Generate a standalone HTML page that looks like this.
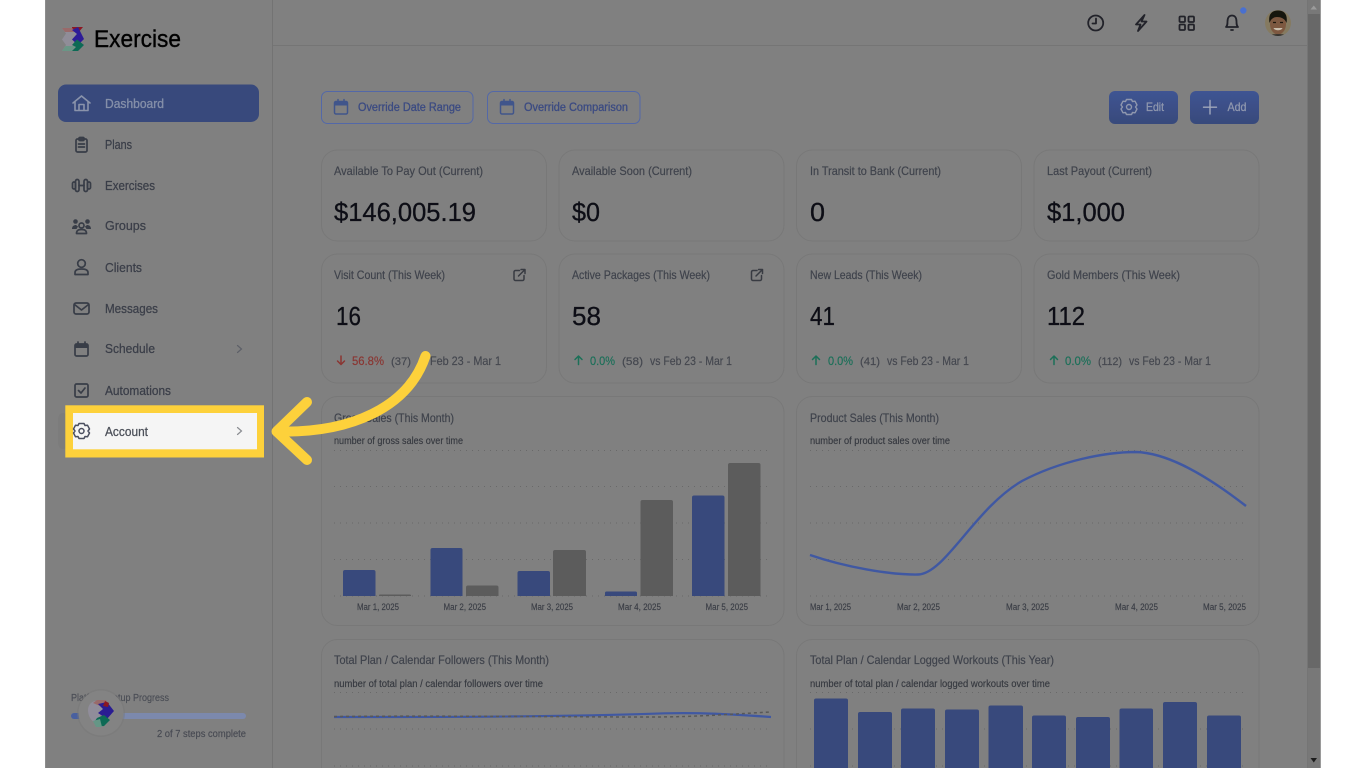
<!DOCTYPE html>
<html lang="en">
<head>
<meta charset="utf-8">
<title>Exercise Dashboard</title>
<style>
html,body{margin:0;padding:0;width:1366px;height:768px;overflow:hidden;background:#fff}
svg{display:block}
text{font-family:"Liberation Sans",sans-serif;white-space:pre}
.nav{font-size:13px;fill:#3a3e48;stroke:#3a3e48;stroke-width:.25px}
.t{font-size:12px;fill:#3f434c;stroke:#3f434c;stroke-width:.2px}
.v{font-size:25.5px;fill:#0e1015;stroke:#0e1015;stroke-width:.3px}
.d{font-size:12px;fill:#44474f;stroke:#44474f;stroke-width:.18px}
.s{font-size:10px;fill:#35383f;stroke:#35383f;stroke-width:.15px}
.x{font-size:9px;fill:#3a3d45;stroke:#3a3d45;stroke-width:.15px}
.ov{font-size:11.5px;fill:#3b4b82;stroke:#3b4b82;stroke-width:.3px}
.ic{fill:none;stroke:#383c47;stroke-width:1.7;stroke-linecap:round;stroke-linejoin:round}
.tp{fill:none;stroke:#222429;stroke-width:1.8;stroke-linecap:round;stroke-linejoin:round}
.ext{fill:none;stroke:#383b43;stroke-width:1.5;stroke-linecap:round;stroke-linejoin:round}
.card{fill:#808080;stroke:#787878;stroke-width:1}
.g{stroke:#696969;stroke-width:1;stroke-dasharray:1 5}
.b{fill:#384a7b}
.k{fill:#5c5c5c}
</style>
</head>
<body>
<svg width="1366" height="768" viewBox="0 0 1366 768" xmlns="http://www.w3.org/2000/svg">
<defs>
<filter id="soft" x="-10" y="-10" width="1386" height="788" filterUnits="userSpaceOnUse"><feGaussianBlur stdDeviation="0.35"/></filter>
<linearGradient id="bg" x1="0" y1="0" x2="0" y2="1"><stop offset="0" stop-color="#3f5493"/><stop offset="1" stop-color="#384a7b"/></linearGradient>
<clipPath id="av"><circle cx="1278" cy="23" r="13"/></clipPath>
</defs>
<rect width="1366" height="768" fill="#fff"/>
<g filter="url(#soft)">
<rect x="45" y="-10" width="1276" height="788" fill="#808080"/>
<rect x="45" y="-10" width="1" height="788" fill="#8d8d8d"/>

<!-- scrollbar -->
<rect x="1307" y="-10" width="13" height="788" fill="#787878"/>
<rect x="1307" y="-10" width="1" height="788" fill="#757575"/>
<rect x="1320" y="-10" width="1" height="788" fill="#9a9a9a"/>
<rect x="1308" y="14" width="12" height="654" fill="#676767"/>
<path d="M1310.5 9.5L1313.8 5.5L1317 9.5Z" fill="#9b9b9b"/>
<path d="M1310.5 758L1313.8 762.5L1317 758Z" fill="#1f1f1f"/>

<!-- structure lines -->
<rect x="272" y="-10" width="1" height="788" fill="#737373"/>
<rect x="273" y="45" width="1034" height="1" fill="#747474"/>

<!-- logo -->
<path d="M62 28H72L77 33.500L72 39.500L77 45L72 51H62L66 45L62 39.500L66 33.500Z" fill="#908d98"/>
<path d="M62 28H72L75.500 32H65Z" fill="#996a6a"/>
<path d="M62 51L65.500 46H75.500L72 51Z" fill="#6a9686"/>
<path d="M72 27H83L78 33L72 28Z" fill="#8c1620"/>
<path d="M72 30L78 27L84 39L78 45L72 39.500L77 34Z" fill="#2f1d98"/>
<path d="M72 45L77 39.500L84 45L78 51H72L76 47Z" fill="#0f6a55"/>
<text x="94" y="47" font-size="24" fill="#060606" stroke="#060606" stroke-width=".4" textLength="87" lengthAdjust="spacingAndGlyphs">Exercise</text>

<!-- nav -->
<rect x="58" y="84.500" width="201" height="37.500" rx="8" fill="#384a7b"/>
<path d="M73 103L81.500 96L90 103M75 101.500V110.500H88V101.500M79 110.500V104.500H84V110.500" fill="none" stroke="#8a93ab" stroke-width="1.600" stroke-linecap="round" stroke-linejoin="round"/>
<text x="105" y="108" class="nav" style="fill:#858fa9;stroke:#858fa9;stroke-width:.3px" textLength="59" lengthAdjust="spacingAndGlyphs">Dashboard</text>

<g class="ic">
<rect x="76" y="139" width="11" height="13" rx="1.500"/><rect x="79" y="137.500" width="5" height="3" rx="1"/><path d="M78.500 144H84.500M78.500 147H84.500"/>
</g>
<text x="105" y="149" class="nav" textLength="27" lengthAdjust="spacingAndGlyphs">Plans</text>

<g class="ic">
<rect x="75.500" y="179.500" width="3.500" height="12" rx="1.700"/><rect x="84" y="179.500" width="3.500" height="12" rx="1.700"/>
<rect x="72.500" y="182" width="3" height="7" rx="1.500"/><rect x="87.500" y="182" width="3" height="7" rx="1.500"/>
<path d="M79 185.500H84"/>
</g>
<text x="105" y="190" class="nav" textLength="50" lengthAdjust="spacingAndGlyphs">Exercises</text>

<g fill="#383c47">
<circle cx="75.500" cy="221.500" r="2.300"/><circle cx="87.500" cy="221.500" r="2.300"/>
<path d="M72 229C72 226 74 225 76 225L78 226.500L76.500 229ZM91 229C91 226 89 225 87 225L85 226.500L86.500 229Z"/>
</g>
<g class="ic"><circle cx="81.500" cy="225.500" r="2.500"/><path d="M76.500 233.500C76.500 230 79 229.500 81.500 229.500C84 229.500 86.500 230 86.500 233.500Z"/></g>
<text x="105" y="230" class="nav" textLength="41" lengthAdjust="spacingAndGlyphs">Groups</text>

<g class="ic"><circle cx="81.500" cy="263.500" r="3.800"/><path d="M75 274.500V272.500C75 270 78 269 81.500 269C85 269 88 270 88 272.500V274.500Z"/></g>
<text x="105" y="272" class="nav" textLength="37" lengthAdjust="spacingAndGlyphs">Clients</text>

<g class="ic"><rect x="74" y="303" width="15" height="11" rx="2"/><path d="M74.500 304.500L81.500 310L88.500 304.500"/></g>
<text x="105" y="313" class="nav" textLength="53" lengthAdjust="spacingAndGlyphs">Messages</text>

<g class="ic"><rect x="75" y="344" width="13" height="12" rx="1.500"/><path d="M78 342V344M85 342V344"/></g>
<path d="M75 344H88V348H75Z" fill="#383c47"/>
<text x="105" y="353" class="nav" textLength="50" lengthAdjust="spacingAndGlyphs">Schedule</text>
<path d="M237.500 345.500L241.500 349L237.500 352.500" fill="none" stroke="#5d6068" stroke-width="1.200" stroke-linecap="round"/>

<g class="ic"><rect x="75" y="384" width="13" height="13" rx="1.500"/><path d="M78.500 390.500L81 393L85 388"/></g>
<text x="105" y="395" class="nav" textLength="66" lengthAdjust="spacingAndGlyphs">Automations</text>

<!-- highlight -->
<rect x="58" y="413" width="10" height="36" rx="6" fill="#7b7b7b"/>
<rect x="65.300" y="405.300" width="198.700" height="52.200" fill="#fdd13b"/>
<rect x="73" y="413" width="184" height="36.300" fill="#f5f5f5"/>
<g fill="none" stroke="#4b5060" stroke-width="1.500" stroke-linejoin="round">
<path d="M79 423.500H84L85 425.500L87.500 425.200L89.500 429L88 431L89.500 433L87.500 436.800L85 436.500L84 438.500H79L78 436.500L75.500 436.800L73.500 433L75 431L73.500 429L75.500 425.200L78 425.500Z"/>
<circle cx="81.500" cy="431" r="2.500"/>
</g>
<text x="105" y="436" class="nav" style="fill:#4b4f58;stroke:#4b4f58" textLength="43" lengthAdjust="spacingAndGlyphs">Account</text>
<path d="M237.500 427.500L241.500 431L237.500 434.500" fill="none" stroke="#8b8d92" stroke-width="1.200" stroke-linecap="round"/>

<!-- setup progress -->
<text x="71" y="701" class="s" style="fill:#4a4d55;stroke:#4a4d55" textLength="98" lengthAdjust="spacingAndGlyphs">Platform Setup Progress</text>
<rect x="71" y="713" width="175" height="6" rx="3" fill="#7b89ad"/>
<rect x="71" y="713" width="14" height="6" rx="3" fill="#48609f"/>
<text x="157" y="737" class="s" style="fill:#474a52;stroke:#474a52" textLength="89" lengthAdjust="spacingAndGlyphs">2 of 7 steps complete</text>
<circle cx="101" cy="713" r="24" fill="#787878" opacity=".45"/>
<circle cx="101" cy="713" r="22.500" fill="#838383"/>
<path d="M88 710C88 704 93 700 98 701L104 708L100 716L104 722C97 727 88 720 88 710Z" fill="#908d9a"/>
<path d="M93 703L97 700H106L108 705L100 706Z" fill="#996a6a"/>
<path d="M98 704L107 702L114 711L107 719L98 713L103 709Z" fill="#2b1f92"/>
<path d="M105 701L109 703L108 707L103 706Z" fill="#8c1620"/>
<path d="M97 718L104 715L110 720L104 726C100 727 97 722 95 721Z" fill="#0f6a55"/>
<path d="M93 721L100 719L102 727H96Z" fill="#659686"/>

<!-- top icons -->
<g class="tp">
<circle cx="1095.700" cy="23" r="7.500"/><path d="M1096 18.500V23.500L1092.500 23.500"/>
<path d="M1144.500 15L1136 24.500H1140.500L1138 31L1146.500 21.500H1141.500Z"/>
<rect x="1179.500" y="16.500" width="5.500" height="5.500" rx="1"/><rect x="1188.500" y="16.500" width="5.500" height="5.500" rx="1"/><rect x="1179.500" y="24.500" width="5.500" height="5.500" rx="1"/><rect x="1188.500" y="24.500" width="5.500" height="5.500" rx="1"/>
<path d="M1226 27C1227.500 25.500 1227.500 24 1227.500 21.500C1227.500 18 1229 15.500 1232 15.500C1235 15.500 1236.500 18 1236.500 21.500C1236.500 24 1236.500 25.500 1238 27ZM1231 30H1233"/>
</g>
<circle cx="1243.300" cy="10.500" r="3.200" fill="#4a6fd0"/>
<g clip-path="url(#av)">
<rect x="1265" y="10" width="26" height="26" fill="#857a60"/>
<ellipse cx="1278" cy="24" rx="8" ry="10.500" fill="#7d5840"/>
<path d="M1269.500 23C1268 14 1272 10.500 1278 10.500C1284 10.500 1288 14 1286.500 23C1285 18.500 1281 17 1277 17C1274 17 1271 18.500 1269.500 23Z" fill="#16120f"/>
<path d="M1273.500 28H1282.500C1281.500 31 1274.500 31 1273.500 28Z" fill="#c9bdad"/>
<path d="M1273 22.500H1276M1280 22.500H1283" stroke="#1c1410" stroke-width="1.300"/>
<path d="M1267 36C1270 33.500 1286 33.500 1289 36Z" fill="#33302d"/>
</g>

<!-- override buttons -->
<rect x="321.500" y="91.500" width="151.500" height="32" rx="6" fill="none" stroke="#5268a8"/>
<rect x="487.500" y="91.500" width="152.500" height="32" rx="6" fill="none" stroke="#5268a8"/>
<g fill="none" stroke="#40548b" stroke-width="1.500" stroke-linecap="round">
<rect x="334.500" y="101.500" width="13" height="12.500" rx="1.500"/><path d="M338 99.500V101.500M344 99.500V101.500"/>
<rect x="500.500" y="101.500" width="13" height="12.500" rx="1.500"/><path d="M504 99.500V101.500M510 99.500V101.500"/>
</g>
<path d="M334.500 101.500H347.500V105.500H334.500ZM500.500 101.500H513.500V105.500H500.500Z" fill="#40548b"/>
<text x="358" y="111" class="ov" textLength="103" lengthAdjust="spacingAndGlyphs">Override Date Range</text>
<text x="524" y="111" class="ov" textLength="104" lengthAdjust="spacingAndGlyphs">Override Comparison</text>

<!-- edit add buttons -->
<rect x="1109" y="91" width="69" height="33" rx="6" fill="url(#bg)"/>
<rect x="1190" y="91" width="69" height="33" rx="6" fill="url(#bg)"/>
<g fill="none" stroke="#8f97ae" stroke-width="1.400" stroke-linejoin="round">
<path d="M1126.500 99.500H1131.500L1132.500 101.500L1135 101.200L1137 105L1135.500 107L1137 109L1135 112.800L1132.500 112.500L1131.500 114.500H1126.500L1125.500 112.500L1123 112.800L1121 109L1122.500 107L1121 105L1123 101.200L1125.500 101.500Z"/>
<circle cx="1129" cy="107" r="2.500"/>
</g>
<path d="M1210 100.500V114M1203.500 107.200H1216.500" stroke="#a0a7bb" stroke-width="1.400" stroke-linecap="round"/>
<text x="1146" y="111" font-size="12" fill="#8f97ae" stroke="#8f97ae" stroke-width=".3" textLength="18" lengthAdjust="spacingAndGlyphs">Edit</text>
<text x="1227.500" y="111" font-size="12" fill="#8f97ae" stroke="#8f97ae" stroke-width=".3" textLength="19" lengthAdjust="spacingAndGlyphs">Add</text>

<!-- row 1 -->
<rect class="card" x="321.500" y="150" width="225" height="91" rx="16"/>
<rect class="card" x="559" y="150" width="225" height="91" rx="16"/>
<rect class="card" x="796.500" y="150" width="225" height="91" rx="16"/>
<rect class="card" x="1034" y="150" width="225" height="91" rx="16"/>
<text x="334" y="175" class="t" textLength="149" lengthAdjust="spacingAndGlyphs">Available To Pay Out (Current)</text>
<text x="572" y="175" class="t" textLength="120" lengthAdjust="spacingAndGlyphs">Available Soon (Current)</text>
<text x="810" y="175" class="t" textLength="131" lengthAdjust="spacingAndGlyphs">In Transit to Bank (Current)</text>
<text x="1047" y="175" class="t" textLength="105" lengthAdjust="spacingAndGlyphs">Last Payout (Current)</text>
<text x="334" y="221" class="v" textLength="142" lengthAdjust="spacingAndGlyphs">$146,005.19</text>
<text x="572" y="221" class="v" textLength="28" lengthAdjust="spacingAndGlyphs">$0</text>
<text x="810" y="221" class="v" textLength="15" lengthAdjust="spacingAndGlyphs">0</text>
<text x="1047" y="221" class="v" textLength="78" lengthAdjust="spacingAndGlyphs">$1,000</text>

<!-- row 2 -->
<rect class="card" x="321.500" y="254" width="225" height="129" rx="16"/>
<rect class="card" x="559" y="254" width="225" height="129" rx="16"/>
<rect class="card" x="796.500" y="254" width="225" height="129" rx="16"/>
<rect class="card" x="1034" y="254" width="225" height="129" rx="16"/>
<text x="334" y="279" class="t" textLength="111" lengthAdjust="spacingAndGlyphs">Visit Count (This Week)</text>
<text x="572" y="279" class="t" textLength="138" lengthAdjust="spacingAndGlyphs">Active Packages (This Week)</text>
<text x="810" y="279" class="t" textLength="112" lengthAdjust="spacingAndGlyphs">New Leads (This Week)</text>
<text x="1047" y="279" class="t" textLength="133" lengthAdjust="spacingAndGlyphs">Gold Members (This Week)</text>
<text x="336" y="325" class="v" textLength="25" lengthAdjust="spacingAndGlyphs">16</text>
<text x="572" y="325" class="v" textLength="29" lengthAdjust="spacingAndGlyphs">58</text>
<text x="810" y="325" class="v" textLength="25" lengthAdjust="spacingAndGlyphs">41</text>
<text x="1047" y="325" class="v" textLength="38" lengthAdjust="spacingAndGlyphs">112</text>

<path d="M341 356V364.500M337.500 361L341 364.500L344.500 361" fill="none" stroke="#8a3632" stroke-width="1.500" stroke-linecap="round" stroke-linejoin="round"/>
<text x="352" y="365" class="d" style="fill:#8a3632;stroke:#8a3632" textLength="32" lengthAdjust="spacingAndGlyphs">56.8%</text>
<text x="391" y="365" class="d" style="font-size:11px" textLength="20" lengthAdjust="spacingAndGlyphs">(37)</text>
<text x="430" y="365" class="d" textLength="71" lengthAdjust="spacingAndGlyphs">Feb 23 - Mar 1</text>

<g fill="none" stroke="#1b6f59" stroke-width="1.500" stroke-linecap="round" stroke-linejoin="round">
<path d="M578.500 364.500V356M575 359.500L578.500 356L582 359.500"/>
<path d="M816 364.500V356M812.500 359.500L816 356L819.500 359.500"/>
<path d="M1054 364.500V356M1050.500 359.500L1054 356L1057.500 359.500"/>
</g>
<text x="590" y="365" class="d" style="fill:#1b6f59;stroke:#1b6f59" textLength="25" lengthAdjust="spacingAndGlyphs">0.0%</text>
<text x="622" y="365" class="d" style="font-size:11px" textLength="21" lengthAdjust="spacingAndGlyphs">(58)</text>
<text x="650" y="365" class="d" textLength="82" lengthAdjust="spacingAndGlyphs">vs Feb 23 - Mar 1</text>
<text x="828" y="365" class="d" style="fill:#1b6f59;stroke:#1b6f59" textLength="25" lengthAdjust="spacingAndGlyphs">0.0%</text>
<text x="860" y="365" class="d" style="font-size:11px" textLength="20" lengthAdjust="spacingAndGlyphs">(41)</text>
<text x="887" y="365" class="d" textLength="82" lengthAdjust="spacingAndGlyphs">vs Feb 23 - Mar 1</text>
<text x="1065" y="365" class="d" style="fill:#1b6f59;stroke:#1b6f59" textLength="26" lengthAdjust="spacingAndGlyphs">0.0%</text>
<text x="1098" y="365" class="d" style="font-size:11px" textLength="24" lengthAdjust="spacingAndGlyphs">(112)</text>
<text x="1129" y="365" class="d" textLength="82" lengthAdjust="spacingAndGlyphs">vs Feb 23 - Mar 1</text>

<!-- external icons -->
<g class="ext">
<path d="M519.500 270.500H515.500A1.500 1.500 0 0 0 514 272V279A1.500 1.500 0 0 0 515.500 280.500H522.500A1.500 1.500 0 0 0 524 279V275.500M518.500 276L525 269.500M521 269.500H525V273.500"/>
<path d="M757 270.500H753A1.500 1.500 0 0 0 751.500 272V279A1.500 1.500 0 0 0 753 280.500H760A1.500 1.500 0 0 0 761.500 279V275.500M756 276L762.500 269.500M758.500 269.500H762.500V273.500"/>
<path d="M757 413.500H753A1.500 1.500 0 0 0 751.500 415V422A1.500 1.500 0 0 0 753 423.500H760A1.500 1.500 0 0 0 761.500 422V418.500M756 419L762.500 412.500M758.500 412.500H762.500V416.500"/>
<path d="M1232.500 413.500H1228.500A1.500 1.500 0 0 0 1227 415V422A1.500 1.500 0 0 0 1228.500 423.500H1235.500A1.500 1.500 0 0 0 1237 422V418.500M1231.500 419L1238 412.500M1234 412.500H1238V416.500"/>
</g>

<!-- row 3 -->
<rect class="card" x="321.500" y="396.500" width="462.500" height="229" rx="16"/>
<rect class="card" x="796.500" y="396.500" width="462.500" height="229" rx="16"/>
<text x="334" y="422" class="t" textLength="120" lengthAdjust="spacingAndGlyphs">Gross Sales (This Month)</text>
<text x="810" y="422" class="t" textLength="129" lengthAdjust="spacingAndGlyphs">Product Sales (This Month)</text>
<text x="334" y="444" class="s" textLength="129" lengthAdjust="spacingAndGlyphs">number of gross sales over time</text>
<text x="810" y="444" class="s" textLength="140" lengthAdjust="spacingAndGlyphs">number of product sales over time</text>

<g class="g">
<path d="M334 450.500H771M334 486.500H771M334 523H771M334 559.500H771M334 596H771"/>
<path d="M810 450.500H1246M810 486.500H1246M810 523H1246M810 559.500H1246M810 596H1246"/>
</g>

<!-- bars left -->
<path class="b" d="M343 596V572Q343 570 345 570H373.500Q375.500 570 375.500 572V596Z"/>
<path class="k" d="M379 596V595.500Q379 594.500 380 594.500H410Q411 594.500 411 595.500V596Z"/>
<path class="b" d="M430.500 596V550Q430.500 548 432.500 548H460.500Q462.500 548 462.500 550V596Z"/>
<path class="k" d="M466 596V587.500Q466 585.500 468 585.500H496.500Q498.500 585.500 498.500 587.500V596Z"/>
<path class="b" d="M517.500 596V573Q517.500 571 519.500 571H548Q550 571 550 573V596Z"/>
<path class="k" d="M553 596V552Q553 550 555 550H584Q586 550 586 552V596Z"/>
<path class="b" d="M605 596V593Q605 591.500 606.500 591.500H635.500Q637 591.500 637 593V596Z"/>
<path class="k" d="M640.500 596V502Q640.500 500 642.500 500H671Q673 500 673 502V596Z"/>
<path class="b" d="M692 596V497.500Q692 495.500 694 495.500H722.500Q724.500 495.500 724.500 497.500V596Z"/>
<path class="k" d="M728 596V465Q728 463 730 463H758.500Q760.500 463 760.500 465V596Z"/>

<text x="357" y="610" class="x" textLength="42" lengthAdjust="spacingAndGlyphs">Mar 1, 2025</text>
<text x="443.500" y="610" class="x" textLength="42.500" lengthAdjust="spacingAndGlyphs">Mar 2, 2025</text>
<text x="531" y="610" class="x" textLength="42" lengthAdjust="spacingAndGlyphs">Mar 3, 2025</text>
<text x="618" y="610" class="x" textLength="43" lengthAdjust="spacingAndGlyphs">Mar 4, 2025</text>
<text x="705.500" y="610" class="x" textLength="42.500" lengthAdjust="spacingAndGlyphs">Mar 5, 2025</text>

<!-- line right -->
<path d="M810 555C845 567 890 575 918 574.500C945 574 975 508 1022 481C1060 461 1105 452 1136 452C1170 453 1210 478 1246 506" fill="none" stroke="#3f58a2" stroke-width="2.400"/>
<text x="810" y="610" class="x" textLength="41" lengthAdjust="spacingAndGlyphs">Mar 1, 2025</text>
<text x="897" y="610" class="x" textLength="43" lengthAdjust="spacingAndGlyphs">Mar 2, 2025</text>
<text x="1006" y="610" class="x" textLength="43" lengthAdjust="spacingAndGlyphs">Mar 3, 2025</text>
<text x="1115" y="610" class="x" textLength="43" lengthAdjust="spacingAndGlyphs">Mar 4, 2025</text>
<text x="1203" y="610" class="x" textLength="43" lengthAdjust="spacingAndGlyphs">Mar 5, 2025</text>

<!-- row 4 -->
<rect class="card" x="321.500" y="639.500" width="462.500" height="160" rx="16"/>
<rect class="card" x="796.500" y="639.500" width="462.500" height="160" rx="16"/>
<text x="334" y="664" class="t" textLength="215" lengthAdjust="spacingAndGlyphs">Total Plan / Calendar Followers (This Month)</text>
<text x="810" y="664" class="t" textLength="244" lengthAdjust="spacingAndGlyphs">Total Plan / Calendar Logged Workouts (This Year)</text>
<text x="334" y="687" class="s" textLength="209" lengthAdjust="spacingAndGlyphs">number of total plan / calendar followers over time</text>
<text x="810" y="687" class="s" textLength="240" lengthAdjust="spacingAndGlyphs">number of total plan / calendar logged workouts over time</text>

<g class="g">
<path d="M334 692.500H771M334 729H771M334 766H771"/>
<path d="M810 692.500H1246M810 729H1246M810 766H1246"/>
</g>

<path d="M334 717C440 717 560 717 665 713.300C700 712.500 730 714 771 717" fill="none" stroke="#3f58a2" stroke-width="2.200"/>
<path d="M334 716.500C450 715.500 560 717 650 717C700 717 730 714 771 712" fill="none" stroke="#585858" stroke-width="1.500" stroke-dasharray="3 3"/>

<!-- bars right -->
<path class="b" d="M814 778V700.500Q814 698.500 816 698.500H846Q848 698.500 848 700.500V778Z"/>
<path class="b" d="M858 778V714Q858 712 860 712H890Q892 712 892 714V778Z"/>
<path class="b" d="M901 778V710.500Q901 708.500 903 708.500H933Q935 708.500 935 710.500V778Z"/>
<path class="b" d="M945 778V711.500Q945 709.500 947 709.500H977Q979 709.500 979 711.500V778Z"/>
<path class="b" d="M988.500 778V707.500Q988.500 705.500 990.500 705.500H1021Q1023 705.500 1023 707.500V778Z"/>
<path class="b" d="M1032 778V717.500Q1032 715.500 1034 715.500H1064Q1066 715.500 1066 717.500V778Z"/>
<path class="b" d="M1076 778V719Q1076 717 1078 717H1108Q1110 717 1110 719V778Z"/>
<path class="b" d="M1119.500 778V710.500Q1119.500 708.500 1121.500 708.500H1151Q1153 708.500 1153 710.500V778Z"/>
<path class="b" d="M1163 778V704Q1163 702 1165 702H1195Q1197 702 1197 704V778Z"/>
<path class="b" d="M1207 778V717.500Q1207 715.500 1209 715.500H1239Q1241 715.500 1241 717.500V778Z"/>

<!-- yellow arrow -->
<g fill="none" stroke="#fdd13b" stroke-width="10" stroke-linecap="round" stroke-linejoin="round">
<path d="M425.500 356C408 408 350 433 279 431.500"/>
<path d="M307 402L276.500 431.500L307 460"/>
</g>
</g>
<!-- crisp white margins -->
<rect x="0" width="45" height="768" fill="#fff"/>
<rect x="1321" width="45" height="768" fill="#fff"/>
</svg>
</body>
</html>
